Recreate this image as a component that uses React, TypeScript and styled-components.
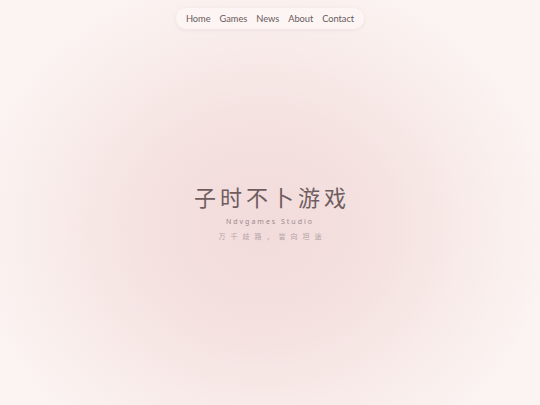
import React from "react";
import styled, { createGlobalStyle } from "styled-components";

const Global = createGlobalStyle`
  html, body { margin: 0; padding: 0; }
  body { width: 540px; height: 405px; overflow: hidden; }
`;

const Page = styled.div`
  position: relative;
  width: 540px;
  height: 405px;
  background: radial-gradient(ellipse 290px 260px at 262px 228px, #f2dbdb 0%, #f4e1e0 40%, #f8ebe9 70%, #fbf4f2 100%), #fcf7f5;
  display: flex;
  flex-direction: column;
  align-items: center;
  font-family: "Noto Sans", sans-serif;
`;

const Nav = styled.nav`
  margin-top: 8px;
  display: flex;
  gap: 9px;
  padding: 0 10px;
  height: 21px;
  align-items: center;
  border-radius: 11px;
  background: rgba(253, 246, 245, 0.85);
  box-shadow: 0 1px 4px rgba(200, 160, 160, 0.18);
`;

const NavLink = styled.a`
  font-family: Lato, "Noto Sans", sans-serif;
  font-size: 9.3px;
  color: #6b5a5c;
  text-decoration: none;
  letter-spacing: -0.05px;
`;

const Hero = styled.div`
  display: flex;
  flex-direction: column;
  align-items: center;
  margin-top: 152px;
`;

const Title = styled.h1`
  margin: 0;
  font-family: "Noto Sans CJK SC", sans-serif;
  font-weight: 400;
  font-size: 22px;
  line-height: 30px;
  letter-spacing: 4px;
  padding-left: 4px;
  color: #6f5d5f;
`;

const Studio = styled.div`
  margin-top: 6px;
  font-family: "Noto Sans", sans-serif;
  font-size: 7px;
  letter-spacing: 2px;
  color: #9a8a8c;
  line-height: 10px;
`;

const Motto = styled.div`
  margin-top: 4px;
  font-family: "Noto Sans CJK SC", sans-serif;
  font-size: 7px;
  letter-spacing: 5px;
  padding-left: 5px;
  color: #b3a3a4;
  line-height: 10px;
`;

export default function App() {
  const links = ["Home", "Games", "News", "About", "Contact"];
  return (
    <Page>
      <Global />
      <Nav>
        {links.map((l) => (
          <NavLink key={l} href="#">{l}</NavLink>
        ))}
      </Nav>
      <Hero>
        <Title>子时不卜游戏</Title>
        <Studio>Ndvgames Studio</Studio>
        <Motto>万千歧路，皆向坦途</Motto>
      </Hero>
    </Page>
  );
}
